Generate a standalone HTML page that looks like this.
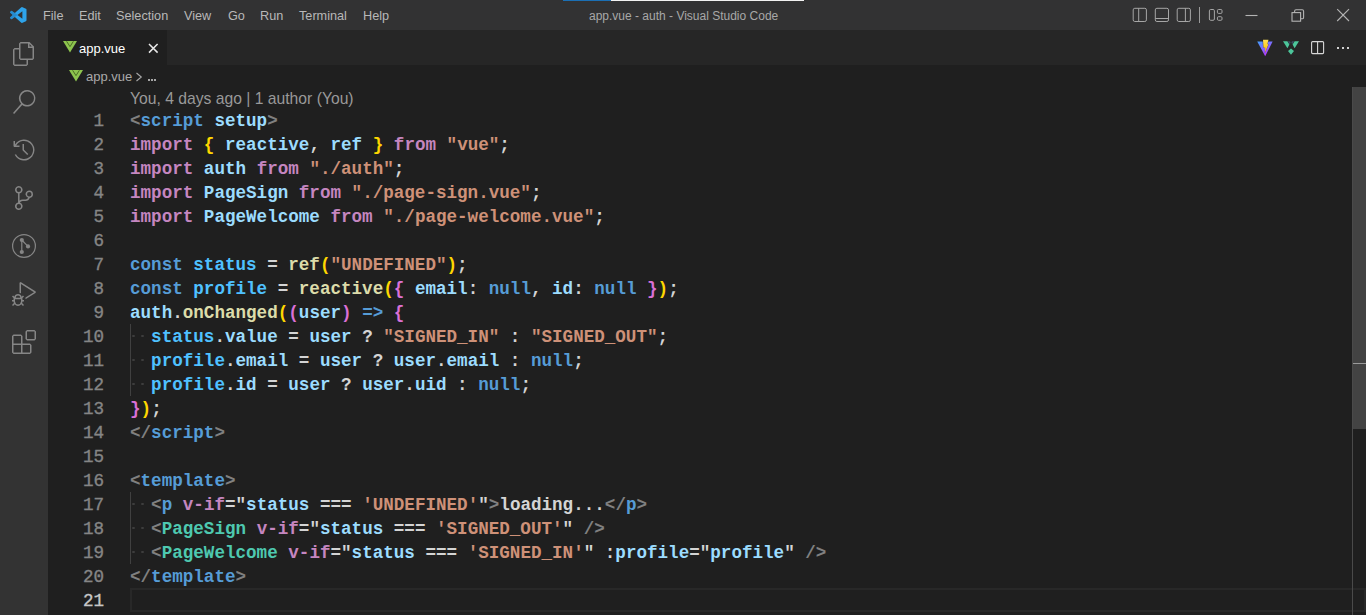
<!DOCTYPE html>
<html><head><meta charset="utf-8">
<style>
*{margin:0;padding:0;box-sizing:border-box}
html,body{width:1366px;height:615px;overflow:hidden;background:#1f1f1f;font-family:"Liberation Sans",sans-serif}
.abs{position:absolute}
#title{left:0;top:0;width:1366px;height:30px;background:#323233}
.menu{position:absolute;top:0.6px;height:30px;line-height:30px;font-size:12.7px;color:#b8b8b8}
#wtitle{position:absolute;top:1px;height:30px;line-height:30px;font-size:12px;color:#a8a8a8;left:589px}
#act{left:0;top:30px;width:48px;height:585px;background:#333333}
#tabs{left:48px;top:30px;width:1318px;height:35px;background:#262626}
#tab{left:48px;top:30px;width:119px;height:35px;background:#1f1f1f}
#editor{left:48px;top:65px;width:1318px;height:550px;background:#1f1f1f}
.ln{position:absolute;padding-top:1px;left:48px;width:56px;text-align:right;font-family:"Liberation Mono",monospace;font-size:17.58px;line-height:24px;color:#858585;height:25px;-webkit-text-stroke-width:0.35px}
.cl{position:absolute;padding-top:1px;left:130px;font-family:"Liberation Mono",monospace;font-weight:bold;font-size:17.58px;line-height:24px;height:25px;white-space:pre;color:#d4d4d4}
.p{color:#808080}.t{color:#569cd6}.v{color:#9cdcfe}.k{color:#c586c0}.s{color:#ce9178}.f{color:#dcdcaa}
.cv{color:#4fc1ff}.b1{color:#ffd700}.b2{color:#da70d6}.c{color:#4ec9b0}.w{color:#d4d4d4}
</style></head><body>
<div id="title" class="abs"></div>
<div id="act" class="abs"></div>
<div id="tabs" class="abs"></div>
<div id="tab" class="abs"></div>
<div id="editor" class="abs"></div>

<div class="menu" style="left:43px">File</div>
<div class="menu" style="left:79px">Edit</div>
<div class="menu" style="left:116px">Selection</div>
<div class="menu" style="left:184px">View</div>
<div class="menu" style="left:228px">Go</div>
<div class="menu" style="left:260px">Run</div>
<div class="menu" style="left:299px">Terminal</div>
<div class="menu" style="left:363px">Help</div>
<div id="wtitle">app.vue - auth - Visual Studio Code</div>


<!-- title bar icons -->
<svg class="abs" style="left:10px;top:7px" width="16.5" height="16" viewBox="0 0 100 100" preserveAspectRatio="none">
<path fill="#2ea3ea" d="M96.46 10.8L75.86.87a6.23 6.23 0 0 0-7.1 1.2L29.35 38.04 12.19 25.01a4.16 4.16 0 0 0-5.32.24L1.36 30.26a4.160 4.160 0 0 0 0 6.16L16.25 50 1.36 63.58a4.16 4.16 0 0 0 0 6.16l5.51 5.01a4.16 4.16 0 0 0 5.32.24l17.16-13.03 39.41 35.96a6.22 6.22 0 0 0 7.1 1.2l20.6-9.91A6.24 6.24 0 0 0 100 83.58V16.42a6.24 6.24 0 0 0-3.54-5.620zM75.01 72.7L45.11 50l29.9-22.7v45.4z"/>
<path fill="#1b6fae" opacity="0.45" d="M29.35 38.04L12.19 25.01a4.16 4.16 0 0 0-5.32.24L1.36 30.26a4.16 4.16 0 0 0 0 6.16L16.25 50 1.36 63.58a4.16 4.16 0 0 0 0 6.16l5.51 5.01a4.16 4.16 0 0 0 5.32.24l17.16-13.03L45.11 50z"/>
</svg>
<svg class="abs" style="left:1125px;top:0" width="110" height="30" fill="none" stroke="#a6a6a6" stroke-width="1">
<rect x="8.2" y="8.3" width="13.2" height="13.2" rx="1.6"/><line x1="13.7" y1="8.3" x2="13.7" y2="21.5"/>
<rect x="30.3" y="8.3" width="13.2" height="13.2" rx="1.6"/><line x1="30.3" y1="18.5" x2="43.5" y2="18.5"/>
<rect x="52.2" y="8.3" width="13.2" height="13.2" rx="1.6"/><line x1="60.4" y1="8.3" x2="60.4" y2="21.5"/>
<line x1="74.5" y1="7" x2="74.5" y2="23" stroke="#9a9a9a"/>
<rect x="84.4" y="9.5" width="5" height="10.8" rx="1.3"/>
<rect x="92.4" y="9.5" width="4.6" height="3.9" rx="1.1"/><rect x="92.4" y="16.7" width="4.6" height="3.6" rx="1.1"/>
</svg>
<svg class="abs" style="left:1236px;top:0" width="130" height="30" fill="none" stroke="#b4b4b4" stroke-width="1.1">
<line x1="9.5" y1="15.5" x2="21.5" y2="15.5"/>
<rect x="56" y="12.6" width="8.6" height="8.6"/>
<path d="M58.6 12.6V11.2c0-.8.6-1.4 1.4-1.4h6.2c.8 0 1.4.6 1.4 1.4v6.2c0 .8-.6 1.4-1.4 1.4h-1.6"/>
<line x1="101.2" y1="9.2" x2="113" y2="21"/><line x1="113" y1="9.2" x2="101.2" y2="21"/>
</svg>
<div class="abs" style="left:563px;top:0;width:241px;height:1px;background:#f2f2f2"></div>
<div class="abs" style="left:563px;top:0;width:48px;height:1px;background:#1b6fb4"></div>

<!-- activity bar icons -->
<svg class="abs" style="left:12px;top:42px" width="24" height="24" viewBox="0 0 24 24" fill="#868686"><path d="M17.5 0h-9L7 1.5V6H2.5L1 7.5v15.07L2.5 24h12.07L16 22.57V18h4.7l1.3-1.43V4.5L17.5 0zm0 2.12l2.38 2.38H17.5V2.12zm-3 20.38h-12v-15H7v9.07L8.5 18h6v4.5zm6-6h-12v-15H16V6h4.5v10.5z"/></svg>
<svg class="abs" style="left:12px;top:90px" width="24" height="24" viewBox="0 0 24 24" fill="#868686"><path d="M15.25 0a8.25 8.25 0 0 0-6.18 13.72L1 22.88l1.120 1.12 8.05-9.12A8.251 8.251 0 1 0 15.25.01V0zm0 15a6.75 6.75 0 1 1 0-13.5 6.75 6.75 0 0 1 0 13.5z"/></svg>
<svg class="abs" style="left:12px;top:138px" width="24" height="24" viewBox="0 0 16 16" fill="#868686"><path d="M13.507 12.324a7 7 0 0 0 .065-8.56A7 7 0 0 0 2 4.393V2H1v3.5l.5.5H5V5H2.811a6.008 6.008 0 1 1-.135 5.77l-.887.462a7 7 0 0 0 11.718 1.092zm-3.361-.97l.708-.707L8 7.792V4H7v4l.146.354 3 3z"/></svg>
<svg class="abs" style="left:12px;top:186px" width="24" height="24" viewBox="0 0 24 24" fill="#868686"><path d="M21.007 8.222A3.738 3.738 0 0 0 15.045 5.2a3.737 3.737 0 0 0 1.156 6.583 2.988 2.988 0 0 1-2.668 1.67h-2.99a4.456 4.456 0 0 0-2.989 1.165V7.4a3.737 3.737 0 1 0-1.494 0v9.117a3.776 3.776 0 1 0 1.816.099 2.99 2.99 0 0 1 2.668-1.667h2.99a4.484 4.484 0 0 0 4.223-3.039 3.736 3.736 0 0 0 3.25-3.687zM4.565 3.738a2.242 2.242 0 1 1 4.484 0 2.242 2.242 0 0 1-4.484 0zm4.484 16.441a2.242 2.242 0 1 1-4.484 0 2.242 2.242 0 0 1 4.484 0zm8.221-9.715a2.242 2.242 0 1 1 0-4.485 2.242 2.242 0 0 1 0 4.485z"/></svg>
<svg class="abs" style="left:12px;top:234px" width="24" height="24" viewBox="0 0 24 24" fill="none" stroke="#868686" stroke-width="1.2"><circle cx="12" cy="12" r="11.4"/><circle cx="9.8" cy="6" r="2.1" fill="#868686" stroke="none"/><circle cx="9.8" cy="18" r="2.1" fill="#868686" stroke="none"/><circle cx="16" cy="12.4" r="2.1" fill="#868686" stroke="none"/><path d="M9.8 6v12M9.8 6l6.2 6.4"/></svg>
<svg class="abs" style="left:12px;top:282px" width="24" height="24" viewBox="0 0 24 24" fill="#868686"><path d="M10.94 13.5l-1.32 1.320a3.73 3.73 0 0 0-7.24 0L1.06 13.5 0 14.56l1.72 1.72-.22.22V18H0v1.5h1.5v.08c.077.489.214.966.41 1.42L0 22.94 1.06 24l1.650-1.65A4.308 4.308 0 0 0 6 24a4.31 4.31 0 0 0 3.29-1.65L10.94 24 12 22.940 10.090 21c.198-.464.336-.951.41-1.45v-.1H12V18h-1.5v-1.5l-.22-.22L12 14.56l-1.06-1.06zM6 13.5a2.25 2.25 0 0 1 2.25 2.25h-4.5A2.250 2.250 0 0 1 6 13.5zm3 6a3.33 3.33 0 0 1-3 3 3.33 3.33 0 0 1-3-3v-2.25h6v2.25zm14.76-9.9v1.26L13.5 17.37V15.6l8.5-5.37L9 2v9.46a5.07 5.07 0 0 0-1.5-.72V.63L8.640.050 23.76 9.6z"/></svg>
<svg class="abs" style="left:12px;top:330px" width="24" height="24" viewBox="0 0 24 24" fill="#868686"><path d="M13.5 1.5L15 0h7.5L24 1.5V9l-1.5 1.5H15L13.5 9V1.5zm1.5 0V9h7.5V1.5H15zM0 15V6l1.5-1.5H9L10.5 6v7.5H18l1.5 1.5v7.5L18 24H1.5L0 22.5V15zm9-1.5V6H1.5v7.5H9zM9 15H1.5v7.5H9V15zm1.5 7.5H18V15h-7.5v7.5z"/></svg>


<!-- tab -->
<svg class="abs" style="left:63px;top:40.8px" width="14" height="12" viewBox="0 0 14 12"><path fill="#8dc44e" d="M0 0h14L7 11.6z"/><path fill="none" stroke="#44621f" stroke-width="0.9" d="M3.6 0.3L7 5.6 10.4 0.3"/></svg>
<div class="abs" style="left:79px;top:31px;height:35px;line-height:35px;font-size:13px;color:#ffffff">app.vue</div>
<svg class="abs" style="left:148px;top:43px" width="11" height="11" fill="none" stroke="#e8e8e8" stroke-width="1.5"><path d="M1 1l8.6 8.6M9.6 1l-8.6 8.6"/></svg>
<!-- breadcrumbs -->
<svg class="abs" style="left:69.3px;top:69.6px" width="14" height="12" viewBox="0 0 14 12"><path fill="#8dc44e" d="M0 0h14L7 11.6z"/><path fill="none" stroke="#44621f" stroke-width="0.9" d="M3.6 0.3L7 5.6 10.4 0.3"/></svg>
<div class="abs" style="left:86px;top:66px;height:22px;line-height:22px;font-size:13px;color:#a9a9a9">app.vue</div>
<svg class="abs" style="left:135px;top:71px" width="8" height="12" fill="none" stroke="#a9a9a9" stroke-width="1.1"><path d="M1.5 2l4.8 4-4.8 4"/></svg>
<div class="abs" style="left:147.5px;top:79px;width:2px;height:2px;background:#a6a6a6"></div><div class="abs" style="left:150.8px;top:79px;width:2px;height:2px;background:#a6a6a6"></div><div class="abs" style="left:154.1px;top:79px;width:2px;height:2px;background:#a6a6a6"></div>
<!-- editor actions -->
<svg class="abs" style="left:1257px;top:39px" width="16" height="18" viewBox="0 0 16 18">
<defs><linearGradient id="vg" x1="0" y1="0" x2="0.6" y2="1"><stop offset="0" stop-color="#41a1ff"/><stop offset="1" stop-color="#bd34fe"/></linearGradient>
<linearGradient id="vy" x1="0" y1="0" x2="0" y2="1"><stop offset="0" stop-color="#ffe05a"/><stop offset="0.55" stop-color="#ffcf20"/><stop offset="1" stop-color="#ff9a50"/></linearGradient></defs>
<path fill="url(#vg)" d="M0.2 2.6L15.6 2.6 8.2 17.2z"/>
<path fill="#1f1f1f" opacity="0.6" d="M5.3 0.3h6.6L10.6 5.2 11.9 5 7.8 14.5 8 8.6 6.2 9z"/>
<path fill="url(#vy)" d="M6 0.7h5.5L10.3 5.3l1.2-.2-3.5 8.6.2-5.2-1.7.3z"/>
</svg>
<svg class="abs" style="left:1283px;top:40px" width="16" height="15" viewBox="0 0 16 15">
<path fill="#4cc59a" d="M0 1.2h4.4L6.4 4.6 4.4 8.2zM16 1.2h-4.4L9.6 4.6 11.6 8.2zM8 8.4l3 2.6-3 3.8-3-3.8z"/>
<path fill="#3b4d66" d="M4.8 1.2h2.2L7.6 2.6 6.8 4.2zM11.2 1.2H9L8.4 2.6l.8 1.6z"/>
</svg>
<svg class="abs" style="left:1310px;top:40px" width="16" height="16" fill="none" stroke="#d8d8d8" stroke-width="1.1"><rect x="1.6" y="1.6" width="12" height="12" rx="1"/><path d="M7.6 1.6v12"/></svg>
<div class="abs" style="left:1336.8px;top:46.9px;width:2px;height:2px;background:#d0d0d0"></div>
<div class="abs" style="left:1341.8px;top:46.9px;width:2px;height:2px;background:#d0d0d0"></div>
<div class="abs" style="left:1346.8px;top:46.9px;width:2px;height:2px;background:#d0d0d0"></div>
<!-- codelens -->
<div class="abs" style="left:130px;top:88px;height:22px;line-height:22px;font-size:15.7px;color:#999999">You, 4 days ago | 1 author (You)</div>
<!-- indent guides -->
<div class="abs" style="left:130px;top:324px;width:1px;height:72px;background:#404040"></div>
<div class="abs" style="left:130px;top:492px;width:1px;height:72px;background:#404040"></div>
<!-- current line -->
<div class="abs" style="left:130px;top:588px;width:1236px;height:24px;border:2px solid #282828"></div>
<!-- scrollbar -->
<div class="abs" style="left:1352px;top:87px;width:1px;height:528px;background:#4a4a4a"></div>
<div class="abs" style="left:1353px;top:87px;width:13px;height:342px;background:#434343"></div>
<div class="abs" style="left:1353px;top:362.5px;width:13px;height:1.3px;background:#9a9a9a"></div>

<div class="abs" style="left:132.4px;top:334.5px;width:3px;height:2px;background:#3d3d3d;border-radius:1px"></div><div class="abs" style="left:141.2px;top:334.5px;width:3px;height:2px;background:#3d3d3d;border-radius:1px"></div><div class="abs" style="left:132.4px;top:358.5px;width:3px;height:2px;background:#3d3d3d;border-radius:1px"></div><div class="abs" style="left:141.2px;top:358.5px;width:3px;height:2px;background:#3d3d3d;border-radius:1px"></div><div class="abs" style="left:132.4px;top:382.5px;width:3px;height:2px;background:#3d3d3d;border-radius:1px"></div><div class="abs" style="left:141.2px;top:382.5px;width:3px;height:2px;background:#3d3d3d;border-radius:1px"></div><div class="abs" style="left:132.4px;top:502.5px;width:3px;height:2px;background:#3d3d3d;border-radius:1px"></div><div class="abs" style="left:141.2px;top:502.5px;width:3px;height:2px;background:#3d3d3d;border-radius:1px"></div><div class="abs" style="left:132.4px;top:526.5px;width:3px;height:2px;background:#3d3d3d;border-radius:1px"></div><div class="abs" style="left:141.2px;top:526.5px;width:3px;height:2px;background:#3d3d3d;border-radius:1px"></div><div class="abs" style="left:132.4px;top:550.5px;width:3px;height:2px;background:#3d3d3d;border-radius:1px"></div><div class="abs" style="left:141.2px;top:550.5px;width:3px;height:2px;background:#3d3d3d;border-radius:1px"></div>
<!-- code -->
<div class="ln" style="top:108px">1</div><div class="cl" style="top:108px"><span class="p">&lt;</span><span class="t">script</span> <span class="v">setup</span><span class="p">&gt;</span></div>
<div class="ln" style="top:132px">2</div><div class="cl" style="top:132px"><span class="k">import</span> <span class="b1">{</span> <span class="v">reactive</span>, <span class="v">ref</span> <span class="b1">}</span> <span class="k">from</span> <span class="s">"vue"</span>;</div>
<div class="ln" style="top:156px">3</div><div class="cl" style="top:156px"><span class="k">import</span> <span class="v">auth</span> <span class="k">from</span> <span class="s">"./auth"</span>;</div>
<div class="ln" style="top:180px">4</div><div class="cl" style="top:180px"><span class="k">import</span> <span class="v">PageSign</span> <span class="k">from</span> <span class="s">"./page-sign.vue"</span>;</div>
<div class="ln" style="top:204px">5</div><div class="cl" style="top:204px"><span class="k">import</span> <span class="v">PageWelcome</span> <span class="k">from</span> <span class="s">"./page-welcome.vue"</span>;</div>
<div class="ln" style="top:228px">6</div>
<div class="ln" style="top:252px">7</div><div class="cl" style="top:252px"><span class="t">const</span> <span class="cv">status</span> = <span class="f">ref</span><span class="b1">(</span><span class="s">"UNDEFINED"</span><span class="b1">)</span>;</div>
<div class="ln" style="top:276px">8</div><div class="cl" style="top:276px"><span class="t">const</span> <span class="cv">profile</span> = <span class="f">reactive</span><span class="b1">(</span><span class="b2">{</span> <span class="v">email</span>: <span class="t">null</span>, <span class="v">id</span>: <span class="t">null</span> <span class="b2">}</span><span class="b1">)</span>;</div>
<div class="ln" style="top:300px">9</div><div class="cl" style="top:300px"><span class="v">auth</span>.<span class="f">onChanged</span><span class="b1">(</span><span class="b2">(</span><span class="v">user</span><span class="b2">)</span> <span class="t">=&gt;</span> <span class="b2">{</span></div>
<div class="ln" style="top:324px">10</div><div class="cl" style="top:324px">  <span class="cv">status</span>.<span class="v">value</span> = <span class="v">user</span> ? <span class="s">"SIGNED_IN"</span> : <span class="s">"SIGNED_OUT"</span>;</div>
<div class="ln" style="top:348px">11</div><div class="cl" style="top:348px">  <span class="cv">profile</span>.<span class="v">email</span> = <span class="v">user</span> ? <span class="v">user</span>.<span class="v">email</span> : <span class="t">null</span>;</div>
<div class="ln" style="top:372px">12</div><div class="cl" style="top:372px">  <span class="cv">profile</span>.<span class="v">id</span> = <span class="v">user</span> ? <span class="v">user</span>.<span class="v">uid</span> : <span class="t">null</span>;</div>
<div class="ln" style="top:396px">13</div><div class="cl" style="top:396px"><span class="b2">}</span><span class="b1">)</span>;</div>
<div class="ln" style="top:420px">14</div><div class="cl" style="top:420px"><span class="p">&lt;/</span><span class="t">script</span><span class="p">&gt;</span></div>
<div class="ln" style="top:444px">15</div>
<div class="ln" style="top:468px">16</div><div class="cl" style="top:468px"><span class="p">&lt;</span><span class="t">template</span><span class="p">&gt;</span></div>
<div class="ln" style="top:492px">17</div><div class="cl" style="top:492px">  <span class="p">&lt;</span><span class="t">p</span> <span class="k">v-if</span>="<span class="v">status</span> === <span class="s">'UNDEFINED'</span>"<span class="p">&gt;</span>loading...<span class="p">&lt;/</span><span class="t">p</span><span class="p">&gt;</span></div>
<div class="ln" style="top:516px">18</div><div class="cl" style="top:516px">  <span class="p">&lt;</span><span class="c">PageSign</span> <span class="k">v-if</span>="<span class="v">status</span> === <span class="s">'SIGNED_OUT'</span>" <span class="p">/&gt;</span></div>
<div class="ln" style="top:540px">19</div><div class="cl" style="top:540px">  <span class="p">&lt;</span><span class="c">PageWelcome</span> <span class="k">v-if</span>="<span class="v">status</span> === <span class="s">'SIGNED_IN'</span>" :<span class="v">profile</span>="<span class="v">profile</span>" <span class="p">/&gt;</span></div>
<div class="ln" style="top:564px">20</div><div class="cl" style="top:564px"><span class="p">&lt;/</span><span class="t">template</span><span class="p">&gt;</span></div>
<div class="ln" style="top:588px;color:#c6c6c6">21</div>

</body></html>
